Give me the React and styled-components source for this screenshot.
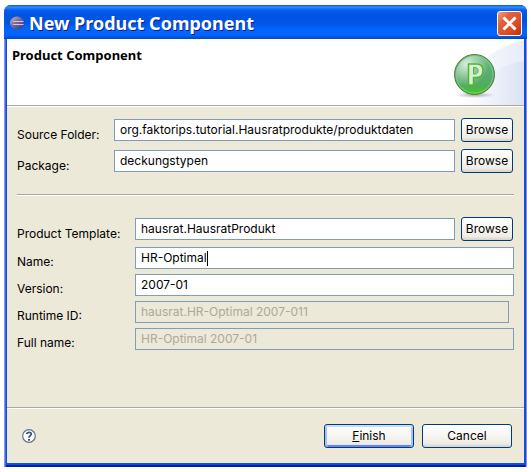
import React from "react";
import styled, { createGlobalStyle, css } from "styled-components";

const GlobalStyle = createGlobalStyle`
  *, *::before, *::after { box-sizing: border-box; }
  body {
    margin: 0;
    background: #fff;
    color: #000;
    font-family: Inter, "Noto Sans", sans-serif;
    font-size: 12px;
    line-height: 16px;
  }
`;

const Page = styled.main`
  display: flex;
  min-height: 100vh;
  padding: 5px 4px;
`;

const Dialog = styled.section`
  flex: 1;
  display: flex;
  flex-direction: column;
  padding: 0 3px 4px;
  border-radius: 7px 7px 0 0;
  background: #0a4fe8;
  box-shadow: inset 1px 0 #8a94e0, inset -1px 0 #8a94e0, inset 2px 0 #3a68e6,
    inset -2px 0 #1c46d8, inset 0 -2px #06209c;
`;

const TitleBar = styled.header`
  display: flex;
  align-items: center;
  gap: 4px;
  height: 34px;
  margin: 0 -3px;
  padding: 2px 5px 0 5px;
  border-radius: 7px 7px 0 0;
  background: linear-gradient(
    #0a52d8 0,
    #2f8dff 2px,
    #0761ee 5px,
    #0054e3 9px,
    #0055e5 18px,
    #0066ff 25px,
    #0066fc 30px,
    #0046cc 34px
  );
`;

const Title = styled.h1`
  flex: 1;
  margin: 0;
  color: #fff;
  font: bold 18px/24px "Noto Sans", sans-serif;
  text-shadow: 1px 1px #0a1f80;
`;

const CloseButton = styled.button`
  display: grid;
  place-items: center;
  width: 25px;
  height: 25px;
  padding: 0;
  border: 1px solid #fff;
  border-radius: 3px;
  background: linear-gradient(135deg, #f0a080, #e3603c 30%, #dc4a20 70%, #b83208);
`;

const Banner = styled.div`
  display: flex;
  justify-content: space-between;
  height: 67px;
  background: #fff;
  border-bottom: 1px solid #aca899;
`;

const BannerTitle = styled.h2`
  margin: 0;
  padding: 7px 5px;
  font: bold 13px/18px "Noto Sans", sans-serif;
`;

const Body = styled.form`
  flex: 1;
  display: flex;
  flex-direction: column;
  background: #ece9d8;
  border-top: 1px solid #fff;
`;

const Fields = styled.div`
  display: grid;
  grid-template-columns: ${(p) => p.$labelWidth} 1fr;
  row-gap: ${(p) => p.$gap};
  padding: 0 10px;
`;

const SourceFields = styled(Fields)`
  padding-top: 11px;
`;

const Label = styled.label`
  padding-top: ${(p) => (p.$browse ? "9px" : "7px")};
  height: 22px;
  white-space: nowrap;
`;

const Control = styled.div`
  display: flex;
  align-items: center;
  gap: 6px;
  height: ${(p) => (p.$browse ? "24px" : "22px")};
  margin-bottom: ${(p) => (p.$browse ? "1px" : "0")};
  padding-right: ${(p) => p.$inset};
`;

const TextBox = styled.input`
  flex: 1;
  min-width: 0;
  height: 22px;
  padding: 0 5px 1px;
  border: 1px solid #7f9db9;
  border-radius: 0;
  background: #fff;
  color: #000;
  font: inherit;
  outline: none;

  ${(p) =>
    p.$caret &&
    css`
      background: linear-gradient(#000, #000) 71px 3px / 1px 15px no-repeat #fff;
    `}

  &:disabled {
    background: #ece9d8;
    color: #aca899;
  }
`;

const Button = styled.button`
  width: ${(p) => (p.$wide ? "90px" : "52px")};
  height: 24px;
  padding: 0;
  border: 1px solid #003c74;
  border-radius: 3px;
  background: linear-gradient(#fff, #f4f3ee 60%, #ecebe5 85%, #d8d0c4);
  color: #000;
  font: inherit;
  ${(p) =>
    p.$primary &&
    css`
      box-shadow: inset 0 2px #c4dcff, inset 2px 0 #a4c0f4, inset -2px 0 #a4c0f4,
        inset 0 -2px #6982ee;
    `}
`;

const Rule = styled.hr`
  width: calc(100% - 20px);
  height: 2px;
  margin: 20px 10px 21px;
  border: 0;
  border-top: 1px solid #aca899;
  background: #fff;
`;

const Footer = styled.footer`
  display: flex;
  align-items: center;
  gap: 8px;
  margin-top: auto;
  padding: 15px 12px 15px 15px;
  height: 56px;
  border-top: 1px solid #aca899;
  box-shadow: inset 0 1px #fff;
`;

const HelpButton = styled.button`
  display: flex;
  margin-right: auto;
  padding: 0;
  border: 0;
  background: none;
`;

function EclipseIcon() {
  return (
    <svg width="16" height="16" viewBox="0 0 16 16" aria-hidden="true">
      <defs>
        <linearGradient id="orb" x1="0" y1="0" x2="1" y2="1">
          <stop offset="0" stopColor="#e0b4ac" />
          <stop offset="0.45" stopColor="#7c6a98" />
          <stop offset="1" stopColor="#2c3080" />
        </linearGradient>
      </defs>
      <ellipse cx="8" cy="8" rx="7" ry="6.500" fill="url(#orb)" />
      <path d="M4 6.500h10.500M4 9.500h10.500" stroke="#c4cbee" strokeWidth="1" />
    </svg>
  );
}

function CloseIcon() {
  return (
    <svg width="17" height="17" viewBox="0 0 17 17" aria-hidden="true">
      <path d="M2.500 2.500l12 12M14.500 2.500l-12 12" stroke="#fff" strokeWidth="3" />
    </svg>
  );
}

function BannerArt() {
  return (
    <svg width="75" height="66" viewBox="0 0 75 66" aria-hidden="true">
      <defs>
        <linearGradient id="swoosh" x1="0" y1="0" x2="1" y2="0">
          <stop offset="0.1" stopColor="#fff" />
          <stop offset="1" stopColor="#e8ecf8" />
        </linearGradient>
        <linearGradient id="swoosh2" x1="0" y1="0" x2="1" y2="0">
          <stop offset="0" stopColor="#f8f9fe" />
          <stop offset="1" stopColor="#dbe2f4" />
        </linearGradient>
        <linearGradient id="ball" x1="0" y1="0" x2="0" y2="1">
          <stop offset="0" stopColor="#6cb87c" />
          <stop offset="0.55" stopColor="#58aa70" />
          <stop offset="0.8" stopColor="#50ae58" />
          <stop offset="1" stopColor="#3ccf10" />
        </linearGradient>
        <radialGradient id="shine" cx="0.28" cy="0.22" r="0.6">
          <stop offset="0" stopColor="#fff" stopOpacity="0.75" />
          <stop offset="1" stopColor="#fff" stopOpacity="0" />
        </radialGradient>
        <radialGradient id="shade">
          <stop offset="0" stopColor="#777" stopOpacity="0.6" />
          <stop offset="1" stopColor="#777" stopOpacity="0" />
        </radialGradient>
      </defs>
      <path d="M0 66C18 30 44 8 75 1V66Z" fill="url(#swoosh)" />
      <path d="M28 66C34 38 51 25 75 22V66Z" fill="url(#swoosh2)" />
      <ellipse cx="26" cy="56" rx="20" ry="3" fill="url(#shade)" />
      <circle cx="25.500" cy="35.500" r="20" fill="url(#ball)" stroke="#587a38" />
      <circle cx="25.500" cy="35.500" r="18.500" fill="url(#shine)" stroke="#8ed49a" strokeOpacity="0.7" />
      <path
        d="M19.500 25H27.500C32 25 34 27.500 34 31.500C34 36 31.500 38.500 27.500 38.500H24.500V46H19.500Z"
        fill="#d8eeda"
        stroke="#4cba28"
        strokeWidth="1.500"
      />
      <path d="M24.500 28.500H26.500C30 29 30 34.500 26.500 35H24.500Z" fill="#8fc99a" stroke="#4cba28" />
    </svg>
  );
}

function HelpIcon() {
  return (
    <svg width="14" height="14" viewBox="0 0 14 14" fill="none" aria-hidden="true">
      <circle cx="7" cy="7" r="6.300" fill="#fff" stroke="#607394" strokeWidth="1.200" />
      <path d="M4.800 5.200C5 2.900 9.200 2.900 9.200 5.100C9.200 6.700 7 6.700 7 8.700" stroke="#3d5480" strokeWidth="1.800" />
      <path d="M6 10h2v1.700h-2z" fill="#3d5480" />
    </svg>
  );
}

function Field({ id, label, value, browse, disabled, short, caret }) {
  const inset = browse ? "1px" : short ? "5px" : "0";
  return (
    <>
      <Label htmlFor={id} $browse={browse}>{label}</Label>
      <Control $inset={inset} $browse={browse}>
        <TextBox id={id} type="text" defaultValue={value} disabled={disabled} $caret={caret} />
        {browse && <Button type="button">Browse</Button>}
      </Control>
    </>
  );
}

export default function App() {
  return (
    <>
      <GlobalStyle />
      <Page>
        <Dialog role="dialog" aria-labelledby="dialog-title">
          <TitleBar>
            <EclipseIcon />
            <Title id="dialog-title">New Product Component</Title>
            <CloseButton type="button" aria-label="Close">
              <CloseIcon />
            </CloseButton>
          </TitleBar>
          <Banner>
            <BannerTitle>Product Component</BannerTitle>
            <BannerArt />
          </Banner>
          <Body onSubmit={(e) => e.preventDefault()}>
            <SourceFields $labelWidth="97px" $gap="6px">
              <Field
                id="source"
                label="Source Folder:"
                value="org.faktorips.tutorial.Hausratprodukte/produktdaten"
                browse
              />
              <Field id="package" label="Package:" value="deckungstypen" browse />
            </SourceFields>
            <Rule />
            <Fields $labelWidth="118px" $gap="5px">
              <Field id="template" label="Product Template:" value="hausrat.HausratProdukt" browse />
              <Field id="name" label="Name:" value="HR-Optimal" caret />
              <Field id="version" label="Version:" value="2007-01" />
              <Field id="runtime" label="Runtime ID:" value="hausrat.HR-Optimal 2007-011" disabled short />
              <Field id="fullname" label="Full name:" value="HR-Optimal 2007-01" disabled />
            </Fields>
            <Footer>
              <HelpButton type="button" aria-label="Help">
                <HelpIcon />
              </HelpButton>
              <Button type="submit" $wide $primary>
                <u>F</u>inish
              </Button>
              <Button type="button" $wide>
                Cancel
              </Button>
            </Footer>
          </Body>
        </Dialog>
      </Page>
    </>
  );
}
